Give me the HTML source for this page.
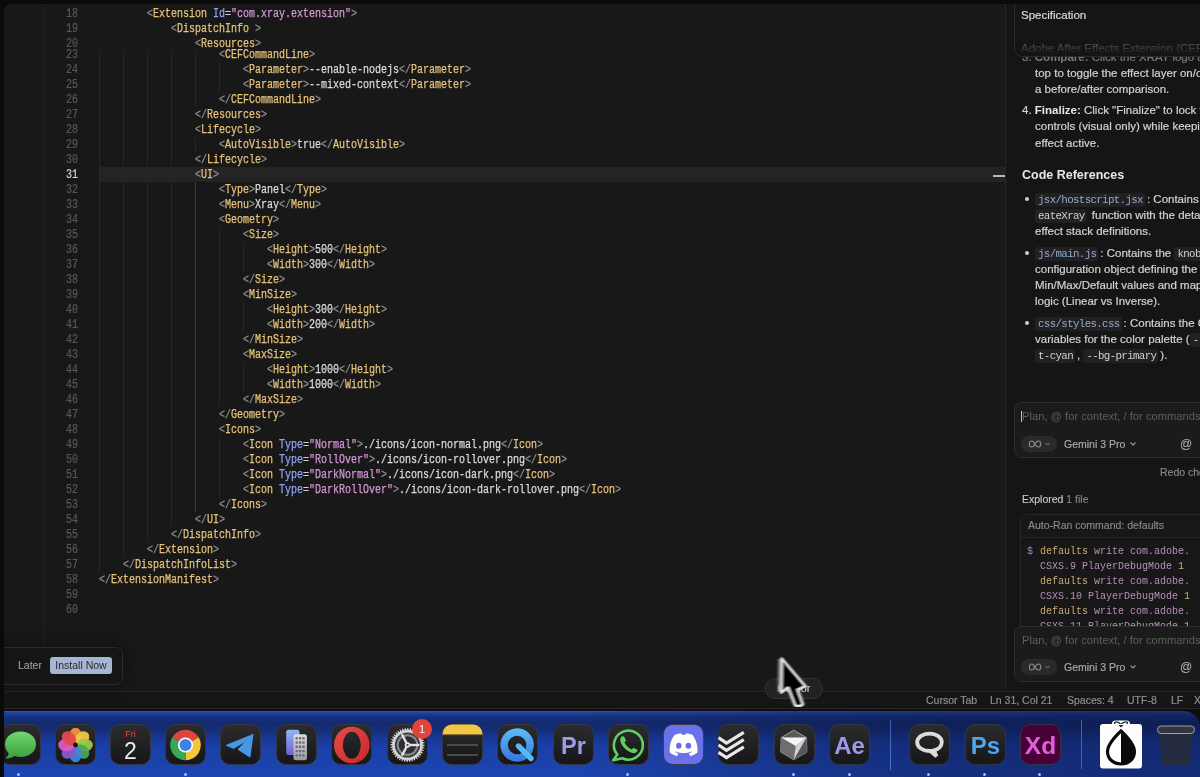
<!DOCTYPE html>
<html><head><meta charset="utf-8">
<style>
*{margin:0;padding:0;box-sizing:border-box}
html,body{width:1200px;height:777px;overflow:hidden;background:#0a0a0b;font-family:"Liberation Sans",sans-serif;position:relative}
.abs{position:absolute}
b{-webkit-text-stroke:0}
#win{position:absolute;left:4px;top:4px;width:1200px;height:705px;background:#181818;border-top-left-radius:6px}
.gutline{position:absolute;left:43px;top:4px;width:1px;height:687px;background:#202020}
.ln{position:absolute;left:44px;width:34px;height:15px;line-height:16px;-webkit-text-stroke:0.2px currentColor;text-align:right;font-family:"Liberation Mono",monospace;font-size:12px;transform:scaleX(0.8333);transform-origin:100% 0;color:#585858}
.ln.cur{color:#d4d4d4}
.cl{position:absolute;height:15px;line-height:16px;white-space:pre;font-family:"Liberation Mono",monospace;font-size:12px;transform:scaleX(0.8333);transform-origin:0 0}
.b{color:#8e8e8e;-webkit-text-stroke:0.25px #8e8e8e}.t{color:#e6c27a;-webkit-text-stroke:0.25px #e6c27a}.a{color:#8fa2f2;-webkit-text-stroke:0.25px #8fa2f2}.e{color:#cfcfcf;-webkit-text-stroke:0.25px #cfcfcf}.s{color:#d497d6;-webkit-text-stroke:0.25px #d497d6}.x{color:#dcdcdc;-webkit-text-stroke:0.25px #dcdcdc}
.g{position:absolute;width:1px;background:#252525}
.g.act{background:#3a3a3a}
#curline{position:absolute;left:99px;top:167px;width:906px;height:15px;background:#242424}
#ovr{position:absolute;left:993px;top:175px;width:12px;height:2px;background:#b8b8b8}
#divider{position:absolute;left:1005px;top:4px;width:1px;height:687px;background:#262626}
#panel{position:absolute;left:1006px;top:4px;width:200px;height:687px;background:#151515;overflow:hidden}
#status{position:absolute;left:4px;top:691px;width:1200px;height:18px;background:#151515;border-top:1px solid #262626}
#winbot{position:absolute;left:4px;top:707px;width:1200px;height:4px;background:linear-gradient(#101010 0,#101010 0.6px,#2a2a2a 0.6px,#2a2a2a 2.5px,#0e0e0e 2.5px)}
#dock{position:absolute;left:4px;top:711px;width:1200px;height:66px;background:linear-gradient(#2d55c4 0px,#21419f 2px,#17317f 6px,#132a6f 12px,#142d78 19px,#183896 27px,#1b3fa8 36px,#1d45b1 66px)}
.t11{position:absolute;white-space:pre;font-size:11.5px;line-height:16px;color:#d2d2d2;-webkit-text-stroke:0.2px currentColor}
.m{font-family:"Liberation Mono",monospace}
.code{font-family:"Liberation Mono",monospace;font-size:10.8px;letter-spacing:-0.65px;-webkit-text-stroke:0;background:#212121;border-radius:3px;padding:1px 2px 1px 3px;margin-right:2px;color:#d0d0d0}
.codeb{color:#93a8d0}
.st{position:absolute;top:693px;font-size:10.5px;line-height:14px;color:#8e8e8e;white-space:pre;-webkit-text-stroke:0.2px currentColor}
.inbox{position:absolute;left:1014px;width:200px;height:56px;border:1px solid #2d2d2d;border-radius:7px;background:#1b1b1b}
.ph{position:absolute;font-size:11.2px;line-height:14px;color:#5e5e5e;white-space:pre}
.pill{position:absolute;left:1021px;width:36px;height:16px;border-radius:8px;background:#2a2a2a}
.gem{position:absolute;font-size:10.5px;line-height:14px;color:#aaaaaa;white-space:pre;-webkit-text-stroke:0.15px currentColor}
.cmd{position:absolute;left:1040px;font-family:"Liberation Mono",monospace;font-size:10px;line-height:15px;white-space:pre;color:#b68fb9}
.cy{color:#c9ad78}
.ico{position:absolute;top:724px}
.dot{position:absolute;top:772.5px;width:3.2px;height:3.2px;border-radius:2px;background:#a9bdf0}
</style></head><body><div id="root" style="position:absolute;left:0;top:0;width:1200px;height:777px;overflow:hidden;will-change:transform">
<div id="win"></div>
<div id="curline"></div>
<div class="g" style="left:99px;top:51px;height:521px"></div>
<div class="g" style="left:123px;top:51px;height:506px"></div>
<div class="g" style="left:147px;top:51px;height:491px"></div>
<div class="g" style="left:171px;top:51px;height:476px"></div>
<div class="g" style="left:195px;top:51px;height:56px"></div>
<div class="g" style="left:195px;top:137px;height:15px"></div>
<div class="g act" style="left:195px;top:182px;height:330px"></div>
<div class="g" style="left:219px;top:62px;height:30px"></div>
<div class="g" style="left:219px;top:227px;height:180px"></div>
<div class="g" style="left:219px;top:437px;height:60px"></div>
<div class="g" style="left:243px;top:242px;height:30px"></div>
<div class="g" style="left:243px;top:302px;height:30px"></div>
<div class="g" style="left:243px;top:362px;height:30px"></div>
<div class="gutline"></div>
<div class="ln" style="top:6px">18</div>
<div class="ln" style="top:21px">19</div>
<div class="ln" style="top:36px">20</div>
<div class="ln" style="top:47px">23</div>
<div class="ln" style="top:62px">24</div>
<div class="ln" style="top:77px">25</div>
<div class="ln" style="top:92px">26</div>
<div class="ln" style="top:107px">27</div>
<div class="ln" style="top:122px">28</div>
<div class="ln" style="top:137px">29</div>
<div class="ln" style="top:152px">30</div>
<div class="ln cur" style="top:167px">31</div>
<div class="ln" style="top:182px">32</div>
<div class="ln" style="top:197px">33</div>
<div class="ln" style="top:212px">34</div>
<div class="ln" style="top:227px">35</div>
<div class="ln" style="top:242px">36</div>
<div class="ln" style="top:257px">37</div>
<div class="ln" style="top:272px">38</div>
<div class="ln" style="top:287px">39</div>
<div class="ln" style="top:302px">40</div>
<div class="ln" style="top:317px">41</div>
<div class="ln" style="top:332px">42</div>
<div class="ln" style="top:347px">43</div>
<div class="ln" style="top:362px">44</div>
<div class="ln" style="top:377px">45</div>
<div class="ln" style="top:392px">46</div>
<div class="ln" style="top:407px">47</div>
<div class="ln" style="top:422px">48</div>
<div class="ln" style="top:437px">49</div>
<div class="ln" style="top:452px">50</div>
<div class="ln" style="top:467px">51</div>
<div class="ln" style="top:482px">52</div>
<div class="ln" style="top:497px">53</div>
<div class="ln" style="top:512px">54</div>
<div class="ln" style="top:527px">55</div>
<div class="ln" style="top:542px">56</div>
<div class="ln" style="top:557px">57</div>
<div class="ln" style="top:572px">58</div>
<div class="ln" style="top:587px">59</div>
<div class="ln" style="top:602px">60</div>
<div class="cl" style="top:6px;left:147px"><span class="b">&lt;</span><span class="t">Extension</span> <span class="a">Id</span><span class="e">=</span><span class="s">"com.xray.extension"</span><span class="b">&gt;</span></div>
<div class="cl" style="top:21px;left:171px"><span class="b">&lt;</span><span class="t">DispatchInfo</span> <span class="b">&gt;</span></div>
<div class="cl" style="top:36px;left:195px"><span class="b">&lt;</span><span class="t">Resources</span><span class="b">&gt;</span></div>
<div class="cl" style="top:47px;left:219px"><span class="b">&lt;</span><span class="t">CEFCommandLine</span><span class="b">&gt;</span></div>
<div class="cl" style="top:62px;left:243px"><span class="b">&lt;</span><span class="t">Parameter</span><span class="b">&gt;</span><span class="x">--enable-nodejs</span><span class="b">&lt;/</span><span class="t">Parameter</span><span class="b">&gt;</span></div>
<div class="cl" style="top:77px;left:243px"><span class="b">&lt;</span><span class="t">Parameter</span><span class="b">&gt;</span><span class="x">--mixed-context</span><span class="b">&lt;/</span><span class="t">Parameter</span><span class="b">&gt;</span></div>
<div class="cl" style="top:92px;left:219px"><span class="b">&lt;/</span><span class="t">CEFCommandLine</span><span class="b">&gt;</span></div>
<div class="cl" style="top:107px;left:195px"><span class="b">&lt;/</span><span class="t">Resources</span><span class="b">&gt;</span></div>
<div class="cl" style="top:122px;left:195px"><span class="b">&lt;</span><span class="t">Lifecycle</span><span class="b">&gt;</span></div>
<div class="cl" style="top:137px;left:219px"><span class="b">&lt;</span><span class="t">AutoVisible</span><span class="b">&gt;</span><span class="x">true</span><span class="b">&lt;/</span><span class="t">AutoVisible</span><span class="b">&gt;</span></div>
<div class="cl" style="top:152px;left:195px"><span class="b">&lt;/</span><span class="t">Lifecycle</span><span class="b">&gt;</span></div>
<div class="cl" style="top:167px;left:195px"><span class="b">&lt;</span><span class="t">UI</span><span class="b">&gt;</span></div>
<div class="cl" style="top:182px;left:219px"><span class="b">&lt;</span><span class="t">Type</span><span class="b">&gt;</span><span class="x">Panel</span><span class="b">&lt;/</span><span class="t">Type</span><span class="b">&gt;</span></div>
<div class="cl" style="top:197px;left:219px"><span class="b">&lt;</span><span class="t">Menu</span><span class="b">&gt;</span><span class="x">Xray</span><span class="b">&lt;/</span><span class="t">Menu</span><span class="b">&gt;</span></div>
<div class="cl" style="top:212px;left:219px"><span class="b">&lt;</span><span class="t">Geometry</span><span class="b">&gt;</span></div>
<div class="cl" style="top:227px;left:243px"><span class="b">&lt;</span><span class="t">Size</span><span class="b">&gt;</span></div>
<div class="cl" style="top:242px;left:267px"><span class="b">&lt;</span><span class="t">Height</span><span class="b">&gt;</span><span class="x">500</span><span class="b">&lt;/</span><span class="t">Height</span><span class="b">&gt;</span></div>
<div class="cl" style="top:257px;left:267px"><span class="b">&lt;</span><span class="t">Width</span><span class="b">&gt;</span><span class="x">300</span><span class="b">&lt;/</span><span class="t">Width</span><span class="b">&gt;</span></div>
<div class="cl" style="top:272px;left:243px"><span class="b">&lt;/</span><span class="t">Size</span><span class="b">&gt;</span></div>
<div class="cl" style="top:287px;left:243px"><span class="b">&lt;</span><span class="t">MinSize</span><span class="b">&gt;</span></div>
<div class="cl" style="top:302px;left:267px"><span class="b">&lt;</span><span class="t">Height</span><span class="b">&gt;</span><span class="x">300</span><span class="b">&lt;/</span><span class="t">Height</span><span class="b">&gt;</span></div>
<div class="cl" style="top:317px;left:267px"><span class="b">&lt;</span><span class="t">Width</span><span class="b">&gt;</span><span class="x">200</span><span class="b">&lt;/</span><span class="t">Width</span><span class="b">&gt;</span></div>
<div class="cl" style="top:332px;left:243px"><span class="b">&lt;/</span><span class="t">MinSize</span><span class="b">&gt;</span></div>
<div class="cl" style="top:347px;left:243px"><span class="b">&lt;</span><span class="t">MaxSize</span><span class="b">&gt;</span></div>
<div class="cl" style="top:362px;left:267px"><span class="b">&lt;</span><span class="t">Height</span><span class="b">&gt;</span><span class="x">1000</span><span class="b">&lt;/</span><span class="t">Height</span><span class="b">&gt;</span></div>
<div class="cl" style="top:377px;left:267px"><span class="b">&lt;</span><span class="t">Width</span><span class="b">&gt;</span><span class="x">1000</span><span class="b">&lt;/</span><span class="t">Width</span><span class="b">&gt;</span></div>
<div class="cl" style="top:392px;left:243px"><span class="b">&lt;/</span><span class="t">MaxSize</span><span class="b">&gt;</span></div>
<div class="cl" style="top:407px;left:219px"><span class="b">&lt;/</span><span class="t">Geometry</span><span class="b">&gt;</span></div>
<div class="cl" style="top:422px;left:219px"><span class="b">&lt;</span><span class="t">Icons</span><span class="b">&gt;</span></div>
<div class="cl" style="top:437px;left:243px"><span class="b">&lt;</span><span class="t">Icon</span> <span class="a">Type</span><span class="e">=</span><span class="s">"Normal"</span><span class="b">&gt;</span><span class="x">./icons/icon-normal.png</span><span class="b">&lt;/</span><span class="t">Icon</span><span class="b">&gt;</span></div>
<div class="cl" style="top:452px;left:243px"><span class="b">&lt;</span><span class="t">Icon</span> <span class="a">Type</span><span class="e">=</span><span class="s">"RollOver"</span><span class="b">&gt;</span><span class="x">./icons/icon-rollover.png</span><span class="b">&lt;/</span><span class="t">Icon</span><span class="b">&gt;</span></div>
<div class="cl" style="top:467px;left:243px"><span class="b">&lt;</span><span class="t">Icon</span> <span class="a">Type</span><span class="e">=</span><span class="s">"DarkNormal"</span><span class="b">&gt;</span><span class="x">./icons/icon-dark.png</span><span class="b">&lt;/</span><span class="t">Icon</span><span class="b">&gt;</span></div>
<div class="cl" style="top:482px;left:243px"><span class="b">&lt;</span><span class="t">Icon</span> <span class="a">Type</span><span class="e">=</span><span class="s">"DarkRollOver"</span><span class="b">&gt;</span><span class="x">./icons/icon-dark-rollover.png</span><span class="b">&lt;/</span><span class="t">Icon</span><span class="b">&gt;</span></div>
<div class="cl" style="top:497px;left:219px"><span class="b">&lt;/</span><span class="t">Icons</span><span class="b">&gt;</span></div>
<div class="cl" style="top:512px;left:195px"><span class="b">&lt;/</span><span class="t">UI</span><span class="b">&gt;</span></div>
<div class="cl" style="top:527px;left:171px"><span class="b">&lt;/</span><span class="t">DispatchInfo</span><span class="b">&gt;</span></div>
<div class="cl" style="top:542px;left:147px"><span class="b">&lt;/</span><span class="t">Extension</span><span class="b">&gt;</span></div>
<div class="cl" style="top:557px;left:123px"><span class="b">&lt;/</span><span class="t">DispatchInfoList</span><span class="b">&gt;</span></div>
<div class="cl" style="top:572px;left:99px"><span class="b">&lt;/</span><span class="t">ExtensionManifest</span><span class="b">&gt;</span></div>
<div id="ovr"></div>
<div id="divider"></div>
<div id="panel"></div>
<!-- panel content -->
<div class="t11" style="left:1022px;top:49px;color:#7a7a7a">3. <b>Compare:</b> Click the XRAY logo at the</div>
<div class="abs" style="left:1014px;top:4px;width:200px;height:53px;border:1px solid #2a2a2a;border-top:none;border-radius:0 0 0 8px;background:#151515;overflow:hidden">
  <div class="t11" style="left:6px;top:3px;color:#dadada">Specification</div>
  <div class="t11" style="left:6px;top:36px;color:#5a5a5a;-webkit-mask-image:linear-gradient(rgba(0,0,0,0.9) 4px,rgba(0,0,0,0.15) 13px)">Adobe After Effects Extension (CEP)</div>
</div>
<div class="t11" style="left:1035px;top:65px">top to toggle the effect layer on/off for</div>
<div class="t11" style="left:1035px;top:81px">a before/after comparison.</div>
<div class="t11" style="left:1022px;top:102px">4. <b style="color:#e8e8e8">Finalize:</b> Click "Finalize" to lock the</div>
<div class="t11" style="left:1035px;top:118px">controls (visual only) while keeping the</div>
<div class="t11" style="left:1035px;top:135px">effect active.</div>
<div class="t11" style="left:1022px;top:167px;font-size:12.5px;font-weight:bold;color:#e6e6e6;-webkit-text-stroke:0">Code References</div>
<div class="abs" style="left:1025px;top:197px;width:4px;height:4px;border-radius:2px;background:#d0d0d0"></div>
<div class="t11" style="left:1035px;top:191px"><span class="code codeb">jsx/hostscript.jsx</span>: Contains the</div>
<div class="t11" style="left:1035px;top:207px"><span class="code">eateXray</span> function with the detailed</div>
<div class="t11" style="left:1035px;top:223px">effect stack definitions.</div>
<div class="abs" style="left:1025px;top:251px;width:4px;height:4px;border-radius:2px;background:#d0d0d0"></div>
<div class="t11" style="left:1035px;top:245px"><span class="code codeb">js/main.js</span>: Contains the <span class="code">knobs</span></div>
<div class="t11" style="left:1035px;top:261px">configuration object defining the</div>
<div class="t11" style="left:1035px;top:277px">Min/Max/Default values and mapping</div>
<div class="t11" style="left:1035px;top:293px">logic (Linear vs Inverse).</div>
<div class="abs" style="left:1025px;top:321px;width:4px;height:4px;border-radius:2px;background:#d0d0d0"></div>
<div class="t11" style="left:1035px;top:315px"><span class="code codeb">css/styles.css</span>: Contains the CSS</div>
<div class="t11" style="left:1035px;top:331px">variables for the color palette (<span class="code">--accen</span></div>
<div class="t11" style="left:1035px;top:347px"><span class="code">t-cyan</span>, <span class="code">--bg-primary</span>).</div>

<div class="inbox" style="top:402px"></div>
<div class="abs" style="left:1021px;top:411px;width:1px;height:11px;background:#c8c8c8"></div>
<div class="ph" style="left:1022px;top:409px">Plan, @ for context, / for commands</div>
<div class="pill" style="top:436px"></div><svg class="abs" style="left:1028px;top:439px" width="30" height="10" viewBox="0 0 30 10"><path d="M6,5 C6,2.8 4.8,2 3.6,2 C2.3,2 1.3,3.2 1.3,5 C1.3,6.8 2.3,8 3.6,8 C4.8,8 6,7.2 7,5 C8,2.8 9.2,2 10.4,2 C11.7,2 12.7,3.2 12.7,5 C12.7,6.8 11.7,8 10.4,8 C9.2,8 8,7.2 7,5" fill="none" stroke="#8a8a8a" stroke-width="1.1"/><path d="M17.5,4 L19.5,6 L21.5,4" fill="none" stroke="#8a8a8a" stroke-width="1"/></svg>
<div class="gem" style="left:1064px;top:437px">Gemini 3 Pro</div><svg class="abs" style="left:1129px;top:441px" width="8" height="6" viewBox="0 0 8 6"><path d="M1.5,1.5 L4,4 L6.5,1.5" fill="none" stroke="#9a9a9a" stroke-width="1.1"/></svg>
<div class="gem" style="left:1180px;top:437px;font-size:12px">@</div>
<div class="gem" style="left:1160px;top:465px;color:#8a8a8a">Redo checkpoint</div>
<div class="gem" style="left:1022px;top:492px;color:#c8c8c8">Explored <span style="color:#858585">1 file</span></div>
<div class="abs" style="left:1020px;top:514px;width:200px;height:120px;border:1px solid #262626;border-radius:6px;background:#171717"></div>
<div class="abs" style="left:1021px;top:537px;width:190px;height:1px;background:#262626"></div>
<div class="gem" style="left:1028px;top:518px;color:#8a8a8a">Auto-Ran command: defaults</div>
<div class="cmd" style="left:1027px;top:544px;color:#8193b8">$</div>
<div class="cmd" style="top:544px"><span class="cy">defaults</span> write com.adobe.
CSXS.9 PlayerDebugMode <span class="cy">1</span>
<span class="cy">defaults</span> write com.adobe.
CSXS.10 PlayerDebugMode <span class="cy">1</span>
<span class="cy">defaults</span> write com.adobe.
CSXS.11 PlayerDebugMode <span class="cy">1</span></div>
<div class="inbox" style="top:626px"></div>
<div class="ph" style="left:1022px;top:633px">Plan, @ for context, / for commands</div>
<div class="pill" style="top:659px"></div><svg class="abs" style="left:1028px;top:662px" width="30" height="10" viewBox="0 0 30 10"><path d="M6,5 C6,2.8 4.8,2 3.6,2 C2.3,2 1.3,3.2 1.3,5 C1.3,6.8 2.3,8 3.6,8 C4.8,8 6,7.2 7,5 C8,2.8 9.2,2 10.4,2 C11.7,2 12.7,3.2 12.7,5 C12.7,6.8 11.7,8 10.4,8 C9.2,8 8,7.2 7,5" fill="none" stroke="#8a8a8a" stroke-width="1.1"/><path d="M17.5,4 L19.5,6 L21.5,4" fill="none" stroke="#8a8a8a" stroke-width="1"/></svg>
<div class="gem" style="left:1064px;top:660px">Gemini 3 Pro</div><svg class="abs" style="left:1129px;top:664px" width="8" height="6" viewBox="0 0 8 6"><path d="M1.5,1.5 L4,4 L6.5,1.5" fill="none" stroke="#9a9a9a" stroke-width="1.1"/></svg>
<div class="gem" style="left:1180px;top:660px;font-size:12px">@</div>

<div id="status"></div>
<div class="st" style="left:926px">Cursor Tab</div>
<div class="st" style="left:990px">Ln 31, Col 21</div>
<div class="st" style="left:1067px">Spaces: 4</div>
<div class="st" style="left:1127px">UTF-8</div>
<div class="st" style="left:1171px">LF</div>
<div class="st" style="left:1194px">X</div>

<!-- toast -->
<div class="abs" style="left:-10px;top:647px;width:133px;height:38px;border:1px solid #2a2a2a;border-radius:7px;background:#151515;box-shadow:0 0 14px 2px rgba(0,0,0,0.35)"></div>
<div class="abs" style="left:18px;top:658px;font-size:10.5px;line-height:14px;color:#a8a8a8">Later</div>
<div class="abs" style="left:50px;top:657px;width:62px;height:17px;border-radius:3px;background:#a5b5d3;font-size:10.5px;line-height:17px;color:#2a2a2a;text-align:center">Install Now</div>

<!-- cursor pill -->
<div class="abs" style="left:765px;top:678px;width:58px;height:21px;border:1px solid #333;border-radius:10px;background:#222;font-size:11px;line-height:19px;color:#ddd;text-align:center">Cursor</div>

<svg class="abs" style="left:770px;top:650px" width="50" height="62" viewBox="0 0 50 62"><defs><filter id="bl" x="-30%" y="-20%" width="160%" height="140%"><feGaussianBlur stdDeviation="0.8 0.5"/></filter></defs>
<g filter="url(#bl)"><path d="M10.5,9 L10,42" stroke="#9a9a9a" stroke-width="5" opacity="0.7"/><path d="M11.7,8.3 L11.2,42.8 L18,37.5 L24.6,54.5 C25.4,56.8 32.2,56.3 33,54 L27.6,39.6 L35.6,36.2 Z" fill="#050505" stroke="#e6e6e6" stroke-width="2.5" stroke-linejoin="round"/>
</g></svg>
<div id="winbot"></div>
<div id="dock"></div><div class="abs" style="left:4px;top:711px;width:1196px;height:66px;background:linear-gradient(90deg,rgba(10,20,60,0) 0px,rgba(10,20,60,0) 560px,rgba(10,20,60,0.25) 760px,rgba(10,20,60,0.45) 950px,rgba(10,20,60,0.5) 1196px)"></div><svg class="abs" style="left:1180px;top:711px" width="20" height="20" viewBox="1180 711 20 20"><path d="M1184,711 A16,16 0 0 1 1200,727 L1200,711 Z" fill="#0e0e0e"/></svg>
<svg class="ico" style="left:-0.5px" width="41" height="41" viewBox="0 0 41 41"><defs><linearGradient id="ib-5" x1="0" y1="0" x2="0" y2="1"><stop offset="0" stop-color="#2c2c2e"/><stop offset="1" stop-color="#161618"/></linearGradient><linearGradient id="msg" x1="0" y1="0" x2="0" y2="1"><stop offset="0" stop-color="#72d86f"/><stop offset="1" stop-color="#3b9c3e"/></linearGradient></defs><rect x="0.5" y="0.5" width="40" height="40" rx="9.5" fill="url(#ib-5)" stroke="#3a3a3c" stroke-width="0.8"/><path d="M20.5,7.5 C29.5,7.5 36,13 36,20.3 C36,27.5 29.5,33 20.5,33 C18.3,33 16.3,32.7 14.5,32 C12,33.8 8.5,34.8 5,34.5 C7.5,33 8.5,31 8.7,29.3 C6.3,27 5,23.8 5,20.3 C5,13 11.5,7.5 20.5,7.5 Z" fill="url(#msg)"/></svg>
<svg class="ico" style="left:54.5px" width="41" height="41" viewBox="0 0 41 41"><defs><linearGradient id="ib545" x1="0" y1="0" x2="0" y2="1"><stop offset="0" stop-color="#2c2c2e"/><stop offset="1" stop-color="#161618"/></linearGradient></defs><rect x="0.5" y="0.5" width="40" height="40" rx="9.5" fill="url(#ib545)" stroke="#3a3a3c" stroke-width="0.8"/><ellipse cx="20.50" cy="11.70" rx="6.3" ry="8" fill="#f0933a" opacity="0.95" transform="rotate(0 20.50 11.70)"/><ellipse cx="27.08" cy="14.42" rx="6.3" ry="8" fill="#f2c544" opacity="0.95" transform="rotate(45 27.08 14.42)"/><ellipse cx="29.80" cy="21.00" rx="6.3" ry="8" fill="#9ac84e" opacity="0.95" transform="rotate(90 29.80 21.00)"/><ellipse cx="27.08" cy="27.58" rx="6.3" ry="8" fill="#49a553" opacity="0.95" transform="rotate(135 27.08 27.58)"/><ellipse cx="20.50" cy="30.30" rx="6.3" ry="8" fill="#3f86dc" opacity="0.95" transform="rotate(180 20.50 30.30)"/><ellipse cx="13.92" cy="27.58" rx="6.3" ry="8" fill="#8b57c6" opacity="0.95" transform="rotate(225 13.92 27.58)"/><ellipse cx="11.20" cy="21.00" rx="6.3" ry="8" fill="#d65cc6" opacity="0.95" transform="rotate(270 11.20 21.00)"/><ellipse cx="13.92" cy="14.42" rx="6.3" ry="8" fill="#e6484b" opacity="0.95" transform="rotate(315 13.92 14.42)"/><circle cx="20.5" cy="21" r="2.4" fill="#111"/></svg>
<svg class="ico" style="left:109.5px" width="41" height="41" viewBox="0 0 41 41"><defs><linearGradient id="ib1095" x1="0" y1="0" x2="0" y2="1"><stop offset="0" stop-color="#2c2c2e"/><stop offset="1" stop-color="#161618"/></linearGradient></defs><rect x="0.5" y="0.5" width="40" height="40" rx="9.5" fill="url(#ib1095)" stroke="#3a3a3c" stroke-width="0.8"/><text x="20.5" y="13" text-anchor="middle" font-family="Liberation Sans" font-size="9" fill="#e2453b">Fri</text><text x="20.5" y="35" text-anchor="middle" font-family="Liberation Sans" font-size="23" fill="#ececec">2</text></svg>
<svg class="ico" style="left:164.8px" width="41" height="41" viewBox="0 0 41 41"><defs><linearGradient id="ib1648" x1="0" y1="0" x2="0" y2="1"><stop offset="0" stop-color="#2c2c2e"/><stop offset="1" stop-color="#161618"/></linearGradient></defs><rect x="0.5" y="0.5" width="40" height="40" rx="9.5" fill="url(#ib1648)" stroke="#3a3a3c" stroke-width="0.8"/><path d="M20.50,21.00 L7.25,13.35 A15.30,15.30 0 0 1 33.75,13.35 Z" fill="#e0443a"/><path d="M20.50,21.00 L33.75,13.35 A15.30,15.30 0 0 1 20.50,36.30 Z" fill="#f4c63d"/><path d="M20.50,21.00 L20.50,36.30 A15.30,15.30 0 0 1 7.25,13.35 Z" fill="#3aa757"/><circle cx="20.5" cy="21" r="7.6" fill="#fff"/><circle cx="20.5" cy="21" r="6" fill="#3f7fe8"/></svg>
<svg class="ico" style="left:220.2px" width="41" height="41" viewBox="0 0 41 41"><defs><linearGradient id="ib2202" x1="0" y1="0" x2="0" y2="1"><stop offset="0" stop-color="#2c2c2e"/><stop offset="1" stop-color="#161618"/></linearGradient></defs><rect x="0.5" y="0.5" width="40" height="40" rx="9.5" fill="url(#ib2202)" stroke="#3a3a3c" stroke-width="0.8"/><path d="M6.6,21.3 L32.7,10.8 L25.2,17.3 L13.4,24.2 Z" fill="#4797e4" stroke="#4797e4" stroke-width="1.2" stroke-linejoin="round"/><path d="M18.6,25.4 L32.7,10.8 L29.8,32.6 Z" fill="#4797e4" stroke="#4797e4" stroke-width="1.4" stroke-linejoin="round"/></svg>
<svg class="ico" style="left:275.8px" width="41" height="41" viewBox="0 0 41 41"><defs><linearGradient id="ib2758" x1="0" y1="0" x2="0" y2="1"><stop offset="0" stop-color="#2c2c2e"/><stop offset="1" stop-color="#161618"/></linearGradient><linearGradient id="simb" x1="0" y1="0" x2="0" y2="1"><stop offset="0" stop-color="#8fb8f2"/><stop offset="1" stop-color="#6a62d2"/></linearGradient><linearGradient id="sims" x1="0" y1="0" x2="0" y2="1"><stop offset="0" stop-color="#dedee2"/><stop offset="1" stop-color="#9a9aa0"/></linearGradient></defs><rect x="0.5" y="0.5" width="40" height="40" rx="9.5" fill="url(#ib2758)" stroke="#3a3a3c" stroke-width="0.8"/><rect x="10.2" y="5.7" width="13.3" height="25.3" rx="2.5" fill="url(#simb)"/><rect x="17.5" y="10.3" width="13.4" height="26" rx="2.5" fill="url(#sims)"/><rect x="19.5" y="13.0" width="2.4" height="2.4" rx="0.5" fill="#5a5a66" opacity="0.8"/><rect x="22.9" y="13.0" width="2.4" height="2.4" rx="0.5" fill="#5a5a66" opacity="0.8"/><rect x="26.3" y="13.0" width="2.4" height="2.4" rx="0.5" fill="#5a5a66" opacity="0.8"/><rect x="19.5" y="17.3" width="2.4" height="2.4" rx="0.5" fill="#5a5a66" opacity="0.8"/><rect x="22.9" y="17.3" width="2.4" height="2.4" rx="0.5" fill="#5a5a66" opacity="0.8"/><rect x="26.3" y="17.3" width="2.4" height="2.4" rx="0.5" fill="#5a5a66" opacity="0.8"/><rect x="19.5" y="21.6" width="2.4" height="2.4" rx="0.5" fill="#5a5a66" opacity="0.8"/><rect x="22.9" y="21.6" width="2.4" height="2.4" rx="0.5" fill="#5a5a66" opacity="0.8"/><rect x="26.3" y="21.6" width="2.4" height="2.4" rx="0.5" fill="#5a5a66" opacity="0.8"/><rect x="19.5" y="25.9" width="2.4" height="2.4" rx="0.5" fill="#5a5a66" opacity="0.8"/><rect x="22.9" y="25.9" width="2.4" height="2.4" rx="0.5" fill="#5a5a66" opacity="0.8"/><rect x="26.3" y="25.9" width="2.4" height="2.4" rx="0.5" fill="#5a5a66" opacity="0.8"/><rect x="19.5" y="30.2" width="2.4" height="2.4" rx="0.5" fill="#5a5a66" opacity="0.8"/><rect x="22.9" y="30.2" width="2.4" height="2.4" rx="0.5" fill="#5a5a66" opacity="0.8"/><rect x="26.3" y="30.2" width="2.4" height="2.4" rx="0.5" fill="#5a5a66" opacity="0.8"/></svg>
<svg class="ico" style="left:330.7px" width="41" height="41" viewBox="0 0 41 41"><defs><linearGradient id="ib3307" x1="0" y1="0" x2="0" y2="1"><stop offset="0" stop-color="#2c2c2e"/><stop offset="1" stop-color="#161618"/></linearGradient><linearGradient id="op" x1="0" y1="0" x2="1" y2="1"><stop offset="0" stop-color="#ea4a45"/><stop offset="1" stop-color="#c42a2a"/></linearGradient></defs><rect x="0.5" y="0.5" width="40" height="40" rx="9.5" fill="url(#ib3307)" stroke="#3a3a3c" stroke-width="0.8"/><path fill-rule="evenodd" fill="url(#op)" d="M20.8,2.7 A17.8,18.3 0 1 1 20.8,39.3 A17.8,18.3 0 1 1 20.8,2.7 Z M20.8,7.8 A9,13.4 0 1 0 20.8,34.6 A9,13.4 0 1 0 20.8,7.8 Z"/></svg>
<svg class="ico" style="left:386.5px" width="41" height="41" viewBox="0 0 41 41"><defs><linearGradient id="ib3865" x1="0" y1="0" x2="0" y2="1"><stop offset="0" stop-color="#2c2c2e"/><stop offset="1" stop-color="#161618"/></linearGradient></defs><rect x="0.5" y="0.5" width="40" height="40" rx="9.5" fill="url(#ib3865)" stroke="#3a3a3c" stroke-width="0.8"/><polygon points="37.70,21.00 37.69,21.68 35.65,22.19 35.59,22.79 37.49,23.69 37.37,24.36 35.28,24.55 35.13,25.13 36.86,26.32 36.64,26.95 34.54,26.82 34.30,27.36 35.83,28.81 35.51,29.40 33.46,28.94 33.14,29.44 34.42,31.11 34.01,31.65 32.06,30.87 31.66,31.32 32.66,33.16 32.18,33.63 30.37,32.56 29.91,32.94 30.61,34.92 30.06,35.30 28.44,33.96 27.93,34.26 28.31,36.33 27.70,36.62 26.32,35.04 25.76,35.26 25.82,37.36 25.17,37.55 24.05,35.78 23.47,35.91 23.19,37.99 22.52,38.08 21.69,36.15 21.10,36.19 20.50,38.20 19.82,38.19 19.31,36.15 18.71,36.09 17.81,37.99 17.14,37.87 16.95,35.78 16.37,35.63 15.18,37.36 14.55,37.14 14.68,35.04 14.14,34.80 12.69,36.33 12.10,36.01 12.56,33.96 12.06,33.64 10.39,34.92 9.85,34.51 10.63,32.56 10.18,32.16 8.34,33.16 7.87,32.68 8.94,30.87 8.56,30.41 6.58,31.11 6.20,30.56 7.54,28.94 7.24,28.43 5.17,28.81 4.88,28.20 6.46,26.82 6.24,26.26 4.14,26.32 3.95,25.67 5.72,24.55 5.59,23.97 3.51,23.69 3.42,23.02 5.35,22.19 5.31,21.60 3.30,21.00 3.31,20.32 5.35,19.81 5.41,19.21 3.51,18.31 3.63,17.64 5.72,17.45 5.87,16.87 4.14,15.68 4.36,15.05 6.46,15.18 6.70,14.64 5.17,13.19 5.49,12.60 7.54,13.06 7.86,12.56 6.58,10.89 6.99,10.35 8.94,11.13 9.34,10.68 8.34,8.84 8.82,8.37 10.63,9.44 11.09,9.06 10.39,7.08 10.94,6.70 12.56,8.04 13.07,7.74 12.69,5.67 13.30,5.38 14.68,6.96 15.24,6.74 15.18,4.64 15.83,4.45 16.95,6.22 17.53,6.09 17.81,4.01 18.48,3.92 19.31,5.85 19.90,5.81 20.50,3.80 21.18,3.81 21.69,5.85 22.29,5.91 23.19,4.01 23.86,4.13 24.05,6.22 24.63,6.37 25.82,4.64 26.45,4.86 26.32,6.96 26.86,7.20 28.31,5.67 28.90,5.99 28.44,8.04 28.94,8.36 30.61,7.08 31.15,7.49 30.37,9.44 30.82,9.84 32.66,8.84 33.13,9.32 32.06,11.13 32.44,11.59 34.42,10.89 34.80,11.44 33.46,13.06 33.76,13.57 35.83,13.19 36.12,13.80 34.54,15.18 34.76,15.74 36.86,15.68 37.05,16.33 35.28,17.45 35.41,18.03 37.49,18.31 37.58,18.98 35.65,19.81 35.69,20.40" fill="#d2d2d6"/><circle cx="20.5" cy="21" r="12.6" fill="#3a3a3e"/><circle cx="20.5" cy="21" r="10.8" fill="#8a8a8e"/><circle cx="20.5" cy="21" r="8.8" fill="#2e2e30"/><line x1="20.5" y1="21" x2="14.87" y2="10.40" stroke="#e2e2e6" stroke-width="2.4"/><line x1="20.5" y1="21" x2="32.50" y2="21.00" stroke="#e2e2e6" stroke-width="2.4"/><line x1="20.5" y1="21" x2="14.87" y2="31.60" stroke="#e2e2e6" stroke-width="2.4"/><circle cx="20.5" cy="21" r="2.8" fill="#e2e2e6"/><circle cx="20.5" cy="21" r="1.1" fill="#444"/></svg>
<svg class="ico" style="left:441.5px" width="41" height="41" viewBox="0 0 41 41"><defs><linearGradient id="ib4415" x1="0" y1="0" x2="0" y2="1"><stop offset="0" stop-color="#2c2c2e"/><stop offset="1" stop-color="#161618"/></linearGradient></defs><rect x="0.5" y="0.5" width="40" height="40" rx="9.5" fill="url(#ib4415)" stroke="#3a3a3c" stroke-width="0.8"/><path d="M0.5,10 L0.5,10 A0,0 0 0 1 0.5,10 Z" fill="none"/><path d="M10,0.5 L31,0.5 A9.5,9.5 0 0 1 40.5,10 L40.5,10.5 L0.5,10.5 L0.5,10 A9.5,9.5 0 0 1 10,0.5 Z" fill="#f3c746"/><line x1="1" y1="11.3" x2="40" y2="11.3" stroke="#555" stroke-width="0.8" stroke-dasharray="1 1.5"/><line x1="5" y1="21" x2="36" y2="21" stroke="#6a6a6c" stroke-width="1.2"/><line x1="5" y1="31" x2="36" y2="31" stroke="#6a6a6c" stroke-width="1.2"/></svg>
<svg class="ico" style="left:497.2px" width="41" height="41" viewBox="0 0 41 41"><defs><linearGradient id="ib4972" x1="0" y1="0" x2="0" y2="1"><stop offset="0" stop-color="#2c2c2e"/><stop offset="1" stop-color="#161618"/></linearGradient><linearGradient id="qt" x1="0" y1="0" x2="0" y2="1"><stop offset="0" stop-color="#58b6f4"/><stop offset="1" stop-color="#3a7be6"/></linearGradient></defs><rect x="0.5" y="0.5" width="40" height="40" rx="9.5" fill="url(#ib4972)" stroke="#3a3a3c" stroke-width="0.8"/><circle cx="20.1" cy="21" r="13" fill="none" stroke="url(#qt)" stroke-width="7.4"/><line x1="21.5" y1="22" x2="34" y2="34.5" stroke="#58b8f6" stroke-width="5.4" stroke-linecap="round"/></svg>
<svg class="ico" style="left:552.5px" width="41" height="41" viewBox="0 0 41 41"><defs><linearGradient id="ib5525" x1="0" y1="0" x2="0" y2="1"><stop offset="0" stop-color="#2c2c2e"/><stop offset="1" stop-color="#161618"/></linearGradient></defs><rect x="0.5" y="0.5" width="40" height="40" rx="9.5" fill="url(#ib5525)" stroke="#3a3a3c" stroke-width="0.8"/><text x="20.5" y="30" text-anchor="middle" font-family="Liberation Sans" font-weight="bold" font-size="23.5" fill="#9b9bf0">Pr</text></svg>
<svg class="ico" style="left:607.8px" width="41" height="41" viewBox="0 0 41 41"><defs><linearGradient id="ib6078" x1="0" y1="0" x2="0" y2="1"><stop offset="0" stop-color="#2c2c2e"/><stop offset="1" stop-color="#161618"/></linearGradient></defs><rect x="0.5" y="0.5" width="40" height="40" rx="9.5" fill="url(#ib6078)" stroke="#3a3a3c" stroke-width="0.8"/><path d="M9.3,30.5 A14.5,14.5 0 1 1 14.3,34.3 L5.2,36.3 Z" fill="none" stroke="#5cd35f" stroke-width="2.6" stroke-linejoin="round"/><path d="M14.3,12.3 C12.5,13.2 11.8,15 12.5,17.5 C14,22.5 19,27.5 24.5,29 C27,29.6 28.6,28.5 29.3,27 L29.5,25.8 L25.5,23.8 L23.8,25.5 C21,24.5 17.5,21 16.5,18.5 L18,16.5 L16,12.5 Z" fill="#5cd35f"/></svg>
<svg class="ico" style="left:662.8px" width="41" height="41" viewBox="0 0 41 41"><defs><linearGradient id="ib6628" x1="0" y1="0" x2="0" y2="1"><stop offset="0" stop-color="#2c2c2e"/><stop offset="1" stop-color="#161618"/></linearGradient></defs><rect x="0.5" y="0.5" width="40" height="40" rx="9.5" fill="#6a72ea" stroke="#3a3a3c" stroke-width="0.8"/><path d="M11.5,11 C14,9.8 16.5,9.3 18,9.2 L18.8,10.8 C20,10.6 21.2,10.6 22.4,10.8 L23.2,9.2 C24.7,9.3 27.2,9.8 29.7,11 C33.5,16.5 35,22.5 34.5,28.5 C32,30.4 29.7,31.5 27.4,32.2 L25.8,29.6 C27,29.2 28,28.6 29,28 L28.2,27.4 C23.3,29.6 17.9,29.6 13,27.4 L12.2,28 C13.2,28.6 14.2,29.2 15.4,29.6 L13.8,32.2 C11.5,31.5 9.2,30.4 6.7,28.5 C6.2,21.5 7.8,16 11.5,11 Z" fill="#fff"/><ellipse cx="15.8" cy="21.8" rx="2.8" ry="3" fill="#6470e8"/><ellipse cx="25.4" cy="21.8" rx="2.8" ry="3" fill="#6470e8"/></svg>
<svg class="ico" style="left:718.2px" width="41" height="41" viewBox="0 0 41 41"><defs><linearGradient id="ib7182" x1="0" y1="0" x2="0" y2="1"><stop offset="0" stop-color="#2c2c2e"/><stop offset="1" stop-color="#161618"/></linearGradient></defs><rect x="0.5" y="0.5" width="40" height="40" rx="9.5" fill="url(#ib7182)" stroke="#3a3a3c" stroke-width="0.8"/><g transform="translate(0,0)"><polyline points="0.5,13.7 8.5,19.0 25.8,8.3" fill="none" stroke="#e8e8ea" stroke-width="3.2" stroke-linejoin="miter"/><polyline points="0.5,21.0 8.5,26.3 25.8,15.6" fill="none" stroke="#e8e8ea" stroke-width="3.2" stroke-linejoin="miter"/><polyline points="0.5,28.3 8.5,33.6 25.8,22.9" fill="none" stroke="#e8e8ea" stroke-width="3.2" stroke-linejoin="miter"/></g></svg>
<svg class="ico" style="left:773.8px" width="41" height="41" viewBox="0 0 41 41"><defs><linearGradient id="ib7738" x1="0" y1="0" x2="0" y2="1"><stop offset="0" stop-color="#2c2c2e"/><stop offset="1" stop-color="#161618"/></linearGradient></defs><rect x="0.5" y="0.5" width="40" height="40" rx="9.5" fill="url(#ib7738)" stroke="#3a3a3c" stroke-width="0.8"/><polygon points="19.80,6.20 32.50,13.60 32.80,28.10 19.80,35.80 6.80,28.10 7.20,13.60" fill="#5a5a5c" stroke="#a8a8aa" stroke-width="0.9" stroke-linejoin="round"/><polygon points="7.20,13.60 21.70,21.90 19.80,35.80 6.80,28.10" fill="#6e6e70"/><polygon points="32.50,13.60 32.80,28.10 19.80,35.80 21.70,21.90" fill="#58585a"/><polygon points="7.20,13.60 32.50,13.60 21.70,21.90" fill="#f6f6f6"/><polygon points="21.70,21.90 32.50,13.60 19.80,35.80" fill="#d2d2d4"/></svg>
<svg class="ico" style="left:829.1px" width="41" height="41" viewBox="0 0 41 41"><defs><linearGradient id="ib8291" x1="0" y1="0" x2="0" y2="1"><stop offset="0" stop-color="#2c2c2e"/><stop offset="1" stop-color="#161618"/></linearGradient></defs><rect x="0.5" y="0.5" width="40" height="40" rx="9.5" fill="url(#ib8291)" stroke="#3a3a3c" stroke-width="0.8"/><text x="20.5" y="30" text-anchor="middle" font-family="Liberation Sans" font-weight="bold" font-size="24" fill="#9d99ea">Ae</text></svg>
<svg class="ico" style="left:908.8px" width="41" height="41" viewBox="0 0 41 41"><defs><linearGradient id="ib9088" x1="0" y1="0" x2="0" y2="1"><stop offset="0" stop-color="#2c2c2e"/><stop offset="1" stop-color="#161618"/></linearGradient></defs><rect x="0.5" y="0.5" width="40" height="40" rx="9.5" fill="url(#ib9088)" stroke="#3a3a3c" stroke-width="0.8"/><path d="M20.5,9.6 C27.5,9.6 32.8,13.5 32.8,18.3 C32.8,22.2 29.5,25.4 25,26.4 L27.5,32.3 L21.5,27 C13.5,27 8.2,23.2 8.2,18.3 C8.2,13.5 13.5,9.6 20.5,9.6 Z" fill="none" stroke="#dcdcde" stroke-width="3.8"/></svg>
<svg class="ico" style="left:964.8px" width="41" height="41" viewBox="0 0 41 41"><defs><linearGradient id="ib9648" x1="0" y1="0" x2="0" y2="1"><stop offset="0" stop-color="#2c2c2e"/><stop offset="1" stop-color="#161618"/></linearGradient></defs><rect x="0.5" y="0.5" width="40" height="40" rx="9.5" fill="url(#ib9648)" stroke="#3a3a3c" stroke-width="0.8"/><text x="20.5" y="30" text-anchor="middle" font-family="Liberation Sans" font-weight="bold" font-size="24" fill="#4da6ee">Ps</text></svg>
<svg class="ico" style="left:1019.7px" width="41" height="41" viewBox="0 0 41 41"><defs><linearGradient id="ib10197" x1="0" y1="0" x2="0" y2="1"><stop offset="0" stop-color="#2c2c2e"/><stop offset="1" stop-color="#161618"/></linearGradient></defs><rect x="0.5" y="0.5" width="40" height="40" rx="9.5" fill="#470137" stroke="#3a3a3c" stroke-width="0.8"/><text x="20.5" y="30" text-anchor="middle" font-family="Liberation Sans" font-weight="bold" font-size="24.5" fill="#e05fdd">Xd</text></svg>
<div class="abs" style="left:890px;top:720px;width:1px;height:50px;background:linear-gradient(#3c5fb0,#4a7ad8)"></div>
<div class="abs" style="left:1081px;top:720px;width:1px;height:49px;background:#56648c"></div>
<svg class="abs" style="left:1099px;top:719px" width="44" height="50" viewBox="0 0 44 50"><path d="M13,5 C13,2 15,1.5 17,1.5 L27,1.5 C29,1.5 31,2 31,5 Z" fill="#fff"/><path d="M22,5.5 C19,2 15,2.5 15.5,4.5 C16,6 19,6 22,5.5 C25,6 28,6 28.5,4.5 C29,2.5 25,2 22,5.5 Z" fill="none" stroke="#222" stroke-width="1.2"/><rect x="1" y="5" width="42" height="44.5" rx="3" fill="#fdfdfd"/><path d="M19.5,6 L22,8.5 L24.5,6 Z" fill="#222"/><path d="M22,12 C22,12 8.5,24 8.5,32.5 C8.5,40 14.5,45 22,45 C29.5,45 35.5,40 35.5,32.5 C35.5,24 22,12 22,12 Z" fill="#fff" stroke="#0a0a0a" stroke-width="3.2"/><path d="M22,12 C22,12 35.5,24 35.5,32.5 C35.5,40 29.5,45 22,45 Z" fill="#0a0a0a"/></svg>
<svg class="abs" style="left:1156px;top:725px" width="40" height="42" viewBox="0 0 40 42"><path d="M3,5 L37,5 L34.2,38.5 C34,40.2 32.8,41 31,41 L9,41 C7.2,41 6,40.2 5.8,38.5 Z" fill="#2a2c36" opacity="0.85"/><rect x="1.5" y="1" width="37" height="7.5" rx="3.7" fill="#33343c" stroke="#a0a0a6" stroke-width="1"/></svg>
<div class="abs" style="left:412px;top:719px;width:20px;height:20px;border-radius:10px;background:#e2443b;color:#fff;font-size:11px;line-height:20px;text-align:center">1</div>
<div class="dot" style="left:17.0px"></div>
<div class="dot" style="left:183.5px"></div>
<div class="dot" style="left:626.0px"></div>
<div class="dot" style="left:792.0px"></div>
<div class="dot" style="left:847.6px"></div>
<div class="dot" style="left:927.0px"></div>
<div class="dot" style="left:983.0px"></div>
<div class="dot" style="left:1038.0px"></div>
<div class="abs" style="left:0;top:0;width:4px;height:777px;background:#0a0a0b"></div>
</div></body></html>
